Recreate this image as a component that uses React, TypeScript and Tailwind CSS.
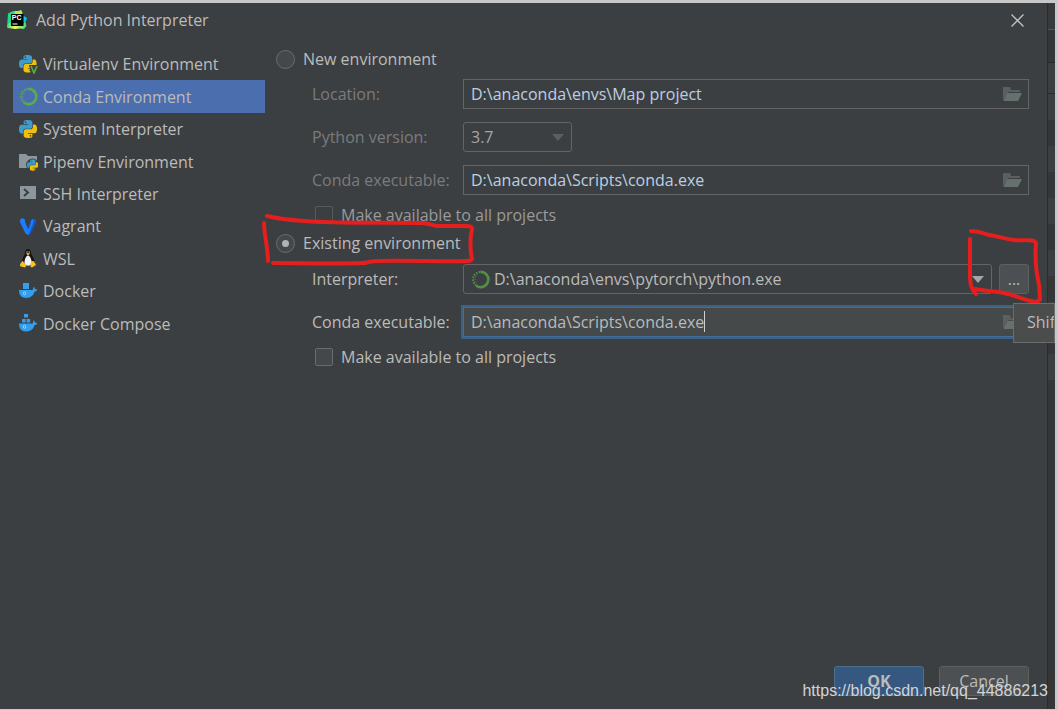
import React, { useState } from 'react';

const PYTHON_HALF =
  'M14.25.18l.9.2.73.26.59.3.45.32.34.34.25.34.16.33.1.3.04.26.02.2-.01.13V8.5l-.05.63-.13.55-.21.46-.26.38-.3.31-.33.25-.35.19-.35.14-.33.1-.3.07-.26.04-.21.02H8.77l-.69.05-.59.14-.5.22-.41.27-.33.32-.27.35-.2.36-.15.37-.1.35-.07.32-.04.27-.02.21v3.06H3.17l-.21-.03-.28-.07-.32-.12-.35-.18-.36-.26-.36-.36-.35-.46-.32-.59-.28-.73-.21-.88-.14-1.05-.05-1.23.06-1.22.16-1.04.24-.87.32-.71.36-.57.4-.44.42-.33.42-.24.4-.16.36-.1.32-.05.24-.01h.16l.06.01h8.16v-.83H6.18l-.01-2.75-.02-.37.05-.34.11-.31.17-.28.25-.26.31-.23.38-.2.44-.18.51-.15.58-.12.64-.1.71-.06.77-.04.84-.02 1.27.05zm-6.3 1.98l-.23.33-.08.41.08.41.23.34.33.22.41.09.41-.09.33-.22.23-.34.08-.41-.08-.41-.23-.33-.33-.22-.41-.09-.41.09z';

const Snakes = () => (
  <>
    <path d={PYTHON_HALF} fill="#3e9ccb" />
    <path d={PYTHON_HALF} fill="#f2bf0c" transform="rotate(180 12 12)" />
  </>
);

const PyCharmIcon = () => (
  <svg viewBox="0 0 20 20" className="h-5 w-5 shrink-0" aria-hidden="true">
    <defs>
      <linearGradient id="pc" x1="0" y1="0" x2="1" y2="0">
        <stop offset="0" stopColor="#2ddc86" />
        <stop offset=".4" stopColor="#f4f65a" />
        <stop offset=".75" stopColor="#8ce86a" />
        <stop offset="1" stopColor="#21d789" />
      </linearGradient>
    </defs>
    <path d="M1 3.500 6 1h5l3-1 1.500 3v3H9L3.500 17 0 17.500z" fill="#21d789" />
    <path d="M8 1h4l2-1 1.500 3-1 2H7z" fill="#b5ec55" />
    <path d="M0 15.500 3.500 12v3h12l2.500-5 1.500 6-2.500 3-4-.500-5 .500-7.500-1z" fill="url(#pc)" />
    <path d="M16 5.500l4 2.500-1 3-3 1.500z" fill="#07c3f2" />
    <rect x="4" y="4" width="12.500" height="12" fill="#000" />
    <text x="4.800" y="10" fill="#fff" fontSize="7" fontWeight="700" fontFamily="Liberation Sans, sans-serif">PC</text>
    <path d="M5.500 14h5" stroke="#fff" strokeWidth="1" />
  </svg>
);

const VirtualenvIcon = () => (
  <svg viewBox="0 0 19 19" className="h-[19px] w-[19px]" aria-hidden="true">
    <g transform="scale(.73)"><Snakes /></g>
    <path d="M10 10h9v9h-7z" fill="#3c3f41" />
    <path d="m12 11 3 7 3-7" fill="none" stroke="#59a845" strokeWidth="1.7" />
  </svg>
);

const CondaIcon = () => (
  <svg viewBox="0 0 19 19" className="h-[19px] w-[19px]" aria-hidden="true">
    <path d="M9.5 1.9a7.6 7.6 0 1 1-4.2 13.8" fill="none" stroke="#58ad48" strokeWidth="2.6" />
    <path d="M5.3 15.7A7.6 7.6 0 0 1 9.5 1.9" fill="none" stroke="#58ad48" strokeWidth="2" strokeDasharray="1.6 1.2" />
    <path d="M6.4 14a5.4 5.4 0 0 1 1-9.6" fill="none" stroke="#58ad48" strokeWidth="1" strokeDasharray="1 1.5" />
  </svg>
);

const PythonIcon = () => (
  <svg viewBox="0 0 24 24" className="h-[18px] w-[18px]" aria-hidden="true"><Snakes /></svg>
);

const PipenvIcon = () => (
  <svg viewBox="0 0 19 19" className="h-[19px] w-[19px]" aria-hidden="true">
    <path d="M0 2h7l2 2h9v12H0z" fill="#8b979e" />
    <circle cx="13.5" cy="13" r="6.4" fill="#3c3f41" />
    <g transform="translate(8 7.4) scale(.47)"><Snakes /></g>
  </svg>
);

const SshIcon = () => (
  <svg viewBox="0 0 19 19" className="h-[19px] w-[19px]" aria-hidden="true">
    <path d="M1 2h16v13H1z" fill="#8b979e" />
    <path d="m5 5 4 3.4L5 12" fill="none" stroke="#3c3f41" strokeWidth="2" />
  </svg>
);

const VagrantIcon = () => (
  <svg viewBox="0 0 19 19" className="h-[19px] w-[19px]" aria-hidden="true">
    <path d="M12 3 14 1.5l3 1V5l-5.5 12L9 18l-1-4z" fill="#1159cc" />
    <path d="M1 2.5 3.5 1 6 2.5V5l3.5 8L12 6V3.5L14.5 2v3L9.500 18 6.500 16.500 1 5z" fill="#1c7dff" />
  </svg>
);

const TuxIcon = () => (
  <svg viewBox="0 0 19 19" className="h-[19px] w-[19px]" aria-hidden="true">
    <path d="M9 0c2 0 3 1.300 3 3.500 0 2.500 3.500 5 3.500 9.500 0 2-2 4-6.500 4s-6-2-6-4C3 9 6 6 6 3.500 6 1.300 7 0 9 0z" fill="#151515" />
    <path d="M9 6.500c2 0 3.600 4 3.600 7 0 2-1.400 3.300-3.600 3.300S5.500 15.500 5.500 13.500c0-3 1.500-7 3.500-7z" fill="#f4f4f4" />
    <circle cx="8" cy="3" r=".8" fill="#aaa" />
    <circle cx="10.200" cy="3" r=".8" fill="#aaa" />
    <path d="M7 4.500 9 4l2.200.6L9 6.400z" fill="#f3b62a" />
    <path d="m3.600 11.800 3.700 4.700L6 18.500l-4.800-1.200-.2-2z" fill="#fbc21e" />
    <path d="m12 12 3 .3 2 3.700-4 2.500-1.700-1z" fill="#fbc21e" />
  </svg>
);

const WhaleBody = () => (
  <>
    <path d="M0 8h13.500c.8-.4.5-2.600 1-3 .9.300 1.300 1 1.400 2l2.400.4c-.2 1.300-1.300 2-2.800 2.200C14.500 14 11.500 16 7.300 16 2.500 16 0 13.300 0 8z" fill="#349ded" />
    <ellipse cx="5.500" cy="11.300" rx="1.200" ry="1.600" fill="none" stroke="#b9dcf5" strokeWidth=".8" />
  </>
);

const DockerIcon = () => (
  <svg viewBox="0 0 19 19" className="h-[19px] w-[19px]" aria-hidden="true">
    <rect x="4" y="1" width="6" height="6" fill="#349ded" />
    <WhaleBody />
  </svg>
);

const ComposeIcon = () => (
  <svg viewBox="0 0 19 19" className="h-[19px] w-[19px]" aria-hidden="true">
    <g transform="translate(0 1.500)">
      <path d="M5-1.500h4v3.500H5zM3 3.500h3.600v3.500H3zM7.600 3.500h3.600v3.500H7.600z" fill="#349ded" />
      <WhaleBody />
    </g>
  </svg>
);

const FolderIcon = () => (
  <svg viewBox="0 0 19 15" className="h-[15px] w-[19px]" aria-hidden="true">
    <path d="M0 0h7l1 3h9v2H5.500L.800 13H0z" fill="#59615f" />
    <path d="M4.500 6H19l-4 8H.500z" fill="#66706f" />
  </svg>
);

const Arrow: React.FC<{ className: string }> = ({ className }) => (
  <svg viewBox="0 0 12 7" className={`pointer-events-none absolute h-[7px] w-3 ${className}`} aria-hidden="true">
    <path d="M0 0h12L6 7z" fill="currentColor" />
  </svg>
);

const ENVIRONMENTS = [
  { name: 'Virtualenv Environment', Icon: VirtualenvIcon },
  { name: 'Conda Environment', Icon: CondaIcon },
  { name: 'System Interpreter', Icon: PythonIcon },
  { name: 'Pipenv Environment', Icon: PipenvIcon },
  { name: 'SSH Interpreter', Icon: SshIcon },
  { name: 'Vagrant', Icon: VagrantIcon },
  { name: 'WSL', Icon: TuxIcon },
  { name: 'Docker', Icon: DockerIcon },
  { name: 'Docker Compose', Icon: ComposeIcon },
];

interface RowProps {
  id: string;
  label: string;
  dim?: boolean;
  children: React.ReactNode;
}

const Row: React.FC<RowProps> = ({ id, label, dim, children }) => (
  <div className="flex h-[30px] items-center">
    <label htmlFor={id} className={`w-[151px] shrink-0 ${dim ? 'text-[#7a7b7c]' : ''}`}>{label}</label>
    {children}
  </div>
);

interface PathFieldProps {
  id: string;
  value: string;
  onChange: (v: string) => void;
  focused?: boolean;
}

const PathField: React.FC<PathFieldProps> = ({ id, value, onChange, focused }) => (
  <div className="relative h-[30px] min-w-0 flex-1">
    <input
      id={id}
      type="text"
      value={value}
      onChange={e => onChange(e.target.value)}
      className={`h-full w-full border pr-9 pl-[7px] outline-none ${focused ? 'border-[#466d94] bg-[#45494a] ring-2 ring-[#3d6185]' : 'border-[#646464] bg-[#3c3f41] text-[#bccfe2]'}`}
    />
    {focused && <span className="absolute top-1 left-[241px] h-[21px] w-px bg-[#d0d0d0]" />}
    <button type="button" aria-label="Browse" className="absolute top-2 right-[7px]"><FolderIcon /></button>
  </div>
);

interface CheckProps {
  dim?: boolean;
  checked: boolean;
  onChange: (v: boolean) => void;
}

const ProjectsCheck: React.FC<CheckProps> = ({ dim, checked, onChange }) => (
  <label className={`mt-[10px] ml-[3px] flex h-5 items-center gap-2 ${dim ? 'text-[#999a9b]' : ''}`}>
    <input
      type="checkbox"
      checked={checked}
      onChange={e => onChange(e.target.checked)}
      className={`h-[18px] w-[18px] appearance-none rounded-[2px] border checked:bg-[#4b6eaf] ${dim ? 'border-[#585b5c]' : 'border-[#6b6b6b] bg-[#43494a]'}`}
    />
    Make available to all projects
  </label>
);

interface ModeProps {
  label: string;
  checked: boolean;
  onSelect: () => void;
}

const ModeRadio: React.FC<ModeProps> = ({ label, checked, onSelect }) => (
  <label className="flex h-[22px] items-center gap-2">
    <span className="relative flex h-[19px] w-[19px] items-center justify-center">
      <input type="radio" name="mode" checked={checked} onChange={onSelect} className="h-[19px] w-[19px] appearance-none rounded-full border border-[#6b6b6b] bg-[#43494a]" />
      {checked && <span className="pointer-events-none absolute h-[7px] w-[7px] rounded-full bg-[#b0b2b3]" />}
    </span>
    {label}
  </label>
);

export default function App() {
  const [selected, setSelected] = useState('Conda Environment');
  const [mode, setMode] = useState<'new' | 'existing'>('existing');
  const [location, setLocation] = useState('D:\\anaconda\\envs\\Map project');
  const [newConda, setNewConda] = useState('D:\\anaconda\\Scripts\\conda.exe');
  const [conda, setConda] = useState('D:\\anaconda\\Scripts\\conda.exe');
  const [newShared, setNewShared] = useState(false);
  const [shared, setShared] = useState(false);

  return (
    <div className="relative flex min-h-screen overflow-hidden border-t-[3px] border-r-[3px] border-b border-[#c8c8c8] bg-[#3c3f41] font-['Open_Sans','Noto_Sans',sans-serif] text-base leading-5 text-[#bbbbbb]">
      <div className="flex min-w-0 flex-1 flex-col">
        <header className="flex h-[34px] items-center gap-[9px] pr-[23px] pl-[7px]">
          <PyCharmIcon />
          <h1 className="flex-1">Add Python Interpreter</h1>
          <button type="button" aria-label="Close">
            <svg viewBox="0 0 13 13" className="h-[13px] w-[13px]" aria-hidden="true">
              <path d="M.5.5l12 12M12.500.5l-12 12" stroke="#c4c4c4" strokeWidth="1.300" />
            </svg>
          </button>
        </header>

        <div className="mt-[11px] flex flex-1 gap-[11px] pr-[18px] pl-[13px]">
          <nav className="grid h-[292px] w-[252px] shrink-0 auto-rows-fr">
            {ENVIRONMENTS.map(({ name, Icon }) => (
              <button
                key={name}
                type="button"
                onClick={() => setSelected(name)}
                className={`flex items-center gap-[5px] pl-[6px] text-left ${name === selected ? 'bg-[#4b6eaf]' : ''}`}
              >
                <span className="w-[19px]"><Icon /></span>
                {name}
              </button>
            ))}
          </nav>

          <form className="min-w-0 flex-1" onSubmit={e => e.preventDefault()}>
            <ModeRadio label="New environment" checked={mode === 'new'} onSelect={() => setMode('new')} />
            <div className="mt-[9px] flex flex-col gap-[13px] pl-9">
              <Row id="location" label="Location:" dim>
                <PathField id="location" value={location} onChange={setLocation} />
              </Row>
              <Row id="version" label="Python version:" dim>
                <div className="relative h-[30px] w-[109px]">
                  <select id="version" defaultValue="3.7" className="h-full w-full appearance-none rounded-[3px] border border-[#646464] bg-[#3c3f41] pl-[7px] text-[#a4a6a7]">
                    <option>3.7</option>
                    <option>3.6</option>
                  </select>
                  <Arrow className="top-3 right-2 text-[#5c5f60]" />
                </div>
              </Row>
              <Row id="new-conda" label="Conda executable:" dim>
                <PathField id="new-conda" value={newConda} onChange={setNewConda} />
              </Row>
            </div>
            <div className="pl-9">
              <ProjectsCheck dim checked={newShared} onChange={setNewShared} />
            </div>

            <div className="mt-[7px]">
              <ModeRadio label="Existing environment" checked={mode === 'existing'} onSelect={() => setMode('existing')} />
            </div>
            <div className="mt-[10px] flex flex-col gap-[13px] pl-9">
              <Row id="interpreter" label="Interpreter:">
                <div className="relative h-[30px] min-w-0 flex-1">
                  <select id="interpreter" className="h-full w-full appearance-none rounded-[3px] border border-[#646464] bg-[#3c3f41] pl-[30px]">
                    <option>D:\anaconda\envs\pytorch\python.exe</option>
                  </select>
                  <span className="pointer-events-none absolute top-[6px] left-2 opacity-75"><CondaIcon /></span>
                  <Arrow className="top-3 right-2 text-[#a3a5a8]" />
                </div>
                <div className="relative ml-[7px]">
                  <button type="button" className="h-[30px] w-[30px] rounded-[3px] border border-[#5e6060] bg-[#4c5052]">...</button>
                  <span role="tooltip" className="absolute top-[39px] left-[14px] z-10 h-10 w-[42px] overflow-hidden border border-[#6b6d6d] bg-[#4b4d4d] pl-[13px] leading-[37px] whitespace-nowrap">Shif</span>
                </div>
              </Row>
              <Row id="conda" label="Conda executable:">
                <PathField id="conda" value={conda} onChange={setConda} focused />
              </Row>
            </div>
            <div className="pl-9">
              <ProjectsCheck checked={shared} onChange={setShared} />
            </div>
          </form>
        </div>

        <footer className="flex justify-end gap-[15px] pr-[18px] pb-[13px]">
          <button type="button" className="h-[30px] w-[90px] rounded-[3px] border border-[#4c708c] bg-[#365880] font-bold">OK</button>
          <button type="button" className="h-[30px] w-[90px] rounded-[3px] border border-[#5e6060] bg-[#4c5052]">Cancel</button>
        </footer>
      </div>

      {/* sliver of the editor window behind the dialog */}
      <div className="flex w-2 shrink-0 flex-col border-l border-[#2b2c2d] bg-[#353637]">
        <div className="h-[27px] border-b border-[#555555] bg-[#38393a]" />
        <div className="h-[33px] border-b border-[#28292a]" />
        <div className="h-[31px] border-b border-[#28292a] bg-[#3d3e3f]" />
        {Array.from({ length: 6 }, (_, i) => (
          <React.Fragment key={i}>
            <div className="h-[26px] bg-[#3b3f41]" />
            <div className="h-[26px] bg-[#353637]" />
          </React.Fragment>
        ))}
      </div>

      {/* red marker strokes */}
      <svg viewBox="0 0 214 54" className="pointer-events-none absolute top-[210px] left-[262px] h-[54px] w-[214px]" fill="none" stroke="#e61e1e" strokeWidth="4" strokeLinecap="round" strokeLinejoin="round" aria-hidden="true">
        <path d="M5 3c12 3 22 4 38 5 40 3 80 1 118 2 7 1 9 2 14 3h21c9 0 14-1 14 3-2 9-2 20 0 30-1 2-3 2-6 2-20 1-60-1-88 0-8 0-11 2-16 2-30 1-60 0-89 0" />
        <path d="M2 10c0 12 4 24 4 38" />
      </svg>
      <svg viewBox="0 0 78 78" className="pointer-events-none absolute top-[226px] left-[966px] h-[78px] w-[78px]" fill="none" stroke="#e61e1e" strokeWidth="4" strokeLinecap="round" strokeLinejoin="round" aria-hidden="true">
        <path d="M5 2c9 0 12 3 19 4 10 2 17 4 24 5 9 1 22-2 22 4-1 12-1 18 1 30 2 8 3 16 3 25-1 3-5 3-9 2-9-2-17-6-27-8-10-2-20-2-29-4" />
        <path d="M4 10v38c0 8 2 13 6 17" />
      </svg>

      <span className="pointer-events-none absolute right-[7px] bottom-2 font-['Liberation_Sans',sans-serif] text-[#d4d4d4]">https://blog.csdn.net/qq_44886213</span>
    </div>
  );
}
